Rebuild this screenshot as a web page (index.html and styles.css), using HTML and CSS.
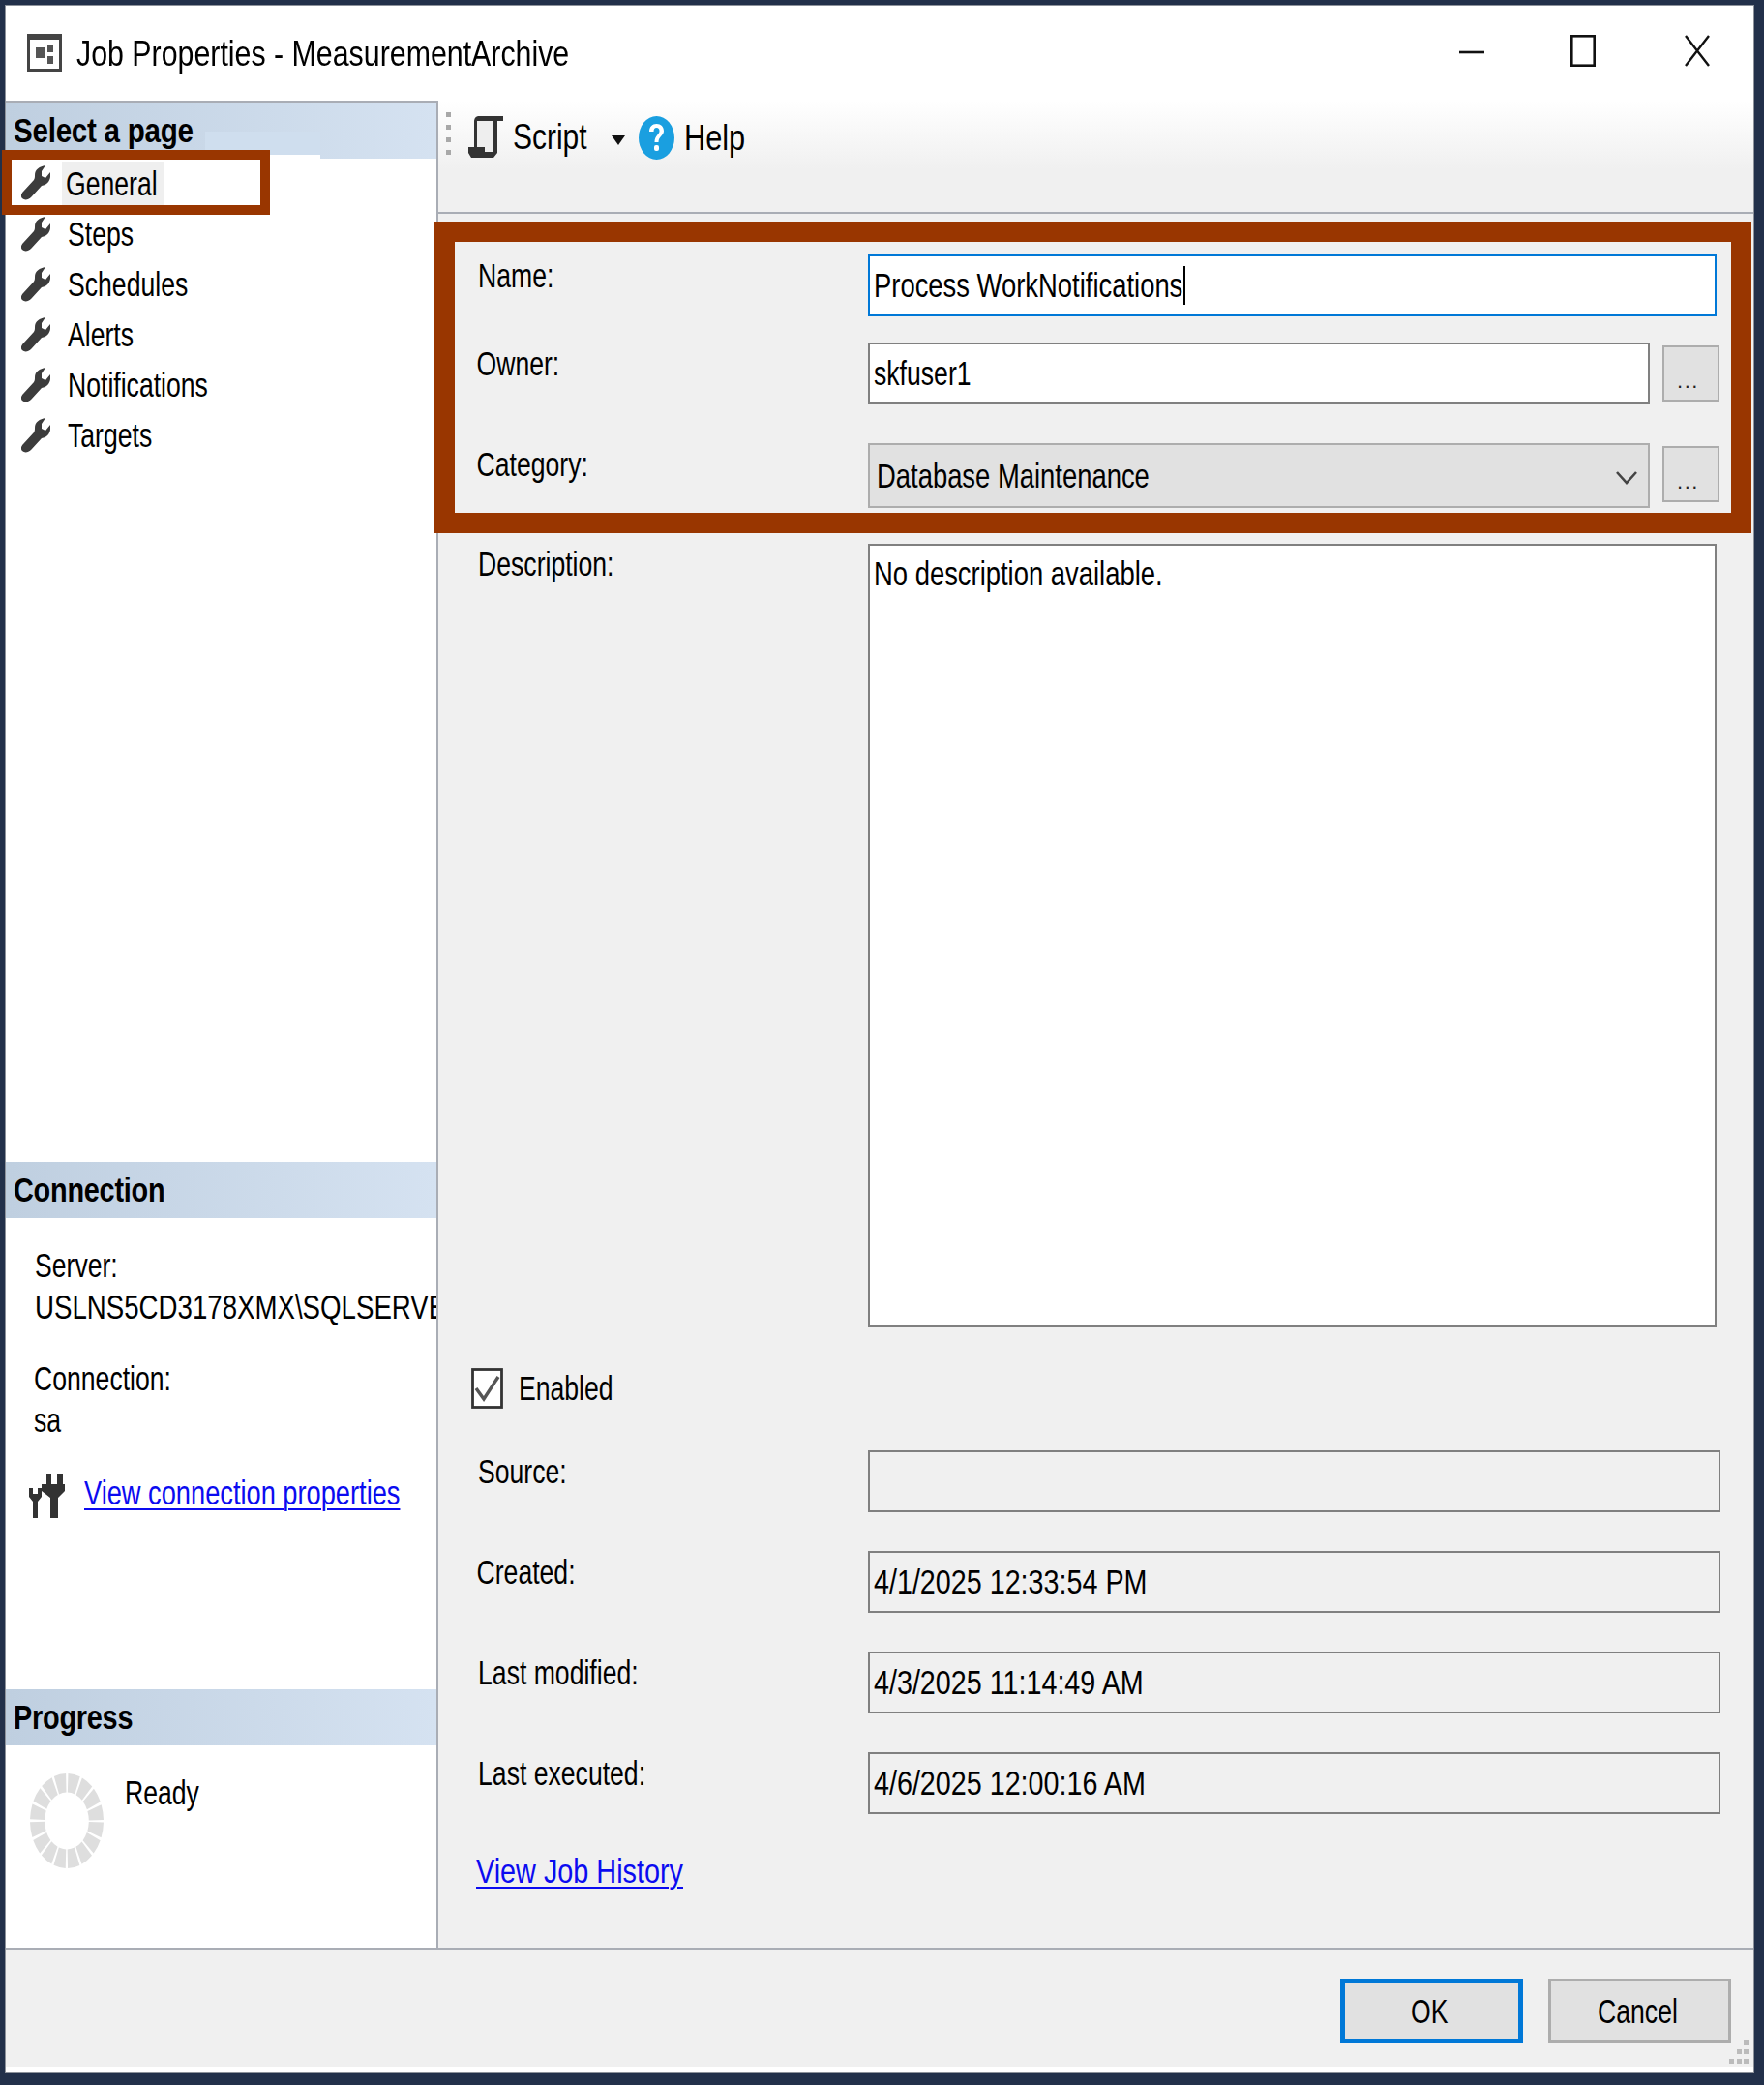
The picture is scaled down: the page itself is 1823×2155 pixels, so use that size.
FILE: index.html
```html
<!DOCTYPE html>
<html lang="en">
<head>
<meta charset="utf-8">
<title>Job Properties - MeasurementArchive</title>
<link rel="stylesheet" href="styles.css">
</head>
<body>
<svg class="defs" aria-hidden="true"><defs><path id="wrench" d="M14 10C14 4 19 1 25 0L21 6V11L25 13L30 7C31 14 28 20 21 21L10 33C7 36 3 36 1 34C-1 32 0 29 2 27L13 15C14 13 14 12 14 10Z"/></defs></svg>
<div class="screen">
  <div class="dialog">
    <header class="titlebar">
      <svg class="app-icon" viewBox="0 0 36 39"><rect x="1.5" y="1.5" width="33" height="36" fill="#fff" stroke="#444" stroke-width="3"/><rect x="2" y="2" width="32" height="4" fill="#444"/><rect x="9" y="14" width="9" height="11" fill="#555"/><rect x="21" y="12" width="6" height="7" fill="#555"/><rect x="21" y="23" width="6" height="8" fill="#555"/></svg>
      <span class="t title-text">Job Properties - MeasurementArchive</span>
      <div class="win-controls">
        <svg class="wc wc-min" viewBox="0 0 26 33"><path d="M0 18h26" stroke="#111" stroke-width="2.6" fill="none"/></svg>
        <svg class="wc wc-max" viewBox="0 0 26 33"><rect x="1.300" y="1.300" width="23.4" height="30.4" fill="none" stroke="#111" stroke-width="2.6"/></svg>
        <svg class="wc wc-close" viewBox="0 0 26 33"><path d="M1 1l24 31M25 1L1 32" stroke="#111" stroke-width="2.4" fill="none"/></svg>
      </div>
    </header>

    <div class="main">
      <aside class="side">
        <section class="side-sec sec-pages">
          <div class="side-head"><span class="t head-text head-select">Select a page</span><i class="head-patch"></i></div>
          <ul class="nav">
            <li class="nav-item"><svg class="wrench" viewBox="0 0 30 36"><use href="#wrench"/></svg><span class="nav-sel"><span class="t">General</span></span></li>
            <li class="nav-item"><svg class="wrench" viewBox="0 0 30 36"><use href="#wrench"/></svg><span class="t">Steps</span></li>
            <li class="nav-item"><svg class="wrench" viewBox="0 0 30 36"><use href="#wrench"/></svg><span class="t">Schedules</span></li>
            <li class="nav-item"><svg class="wrench" viewBox="0 0 30 36"><use href="#wrench"/></svg><span class="t">Alerts</span></li>
            <li class="nav-item"><svg class="wrench" viewBox="0 0 30 36"><use href="#wrench"/></svg><span class="t">Notifications</span></li>
            <li class="nav-item"><svg class="wrench" viewBox="0 0 30 36"><use href="#wrench"/></svg><span class="t">Targets</span></li>
          </ul>
        </section>

        <section class="side-sec sec-conn">
          <div class="side-head"><span class="t head-text">Connection</span></div>
          <div class="conn-body">
            <div class="conn-line"><span class="t">Server:</span></div>
            <div class="conn-line"><span class="t t-server">USLNS5CD3178XMX\SQLSERVER</span></div>
            <div class="conn-line conn-gap"><span class="t">Connection:</span></div>
            <div class="conn-line"><span class="t">sa</span></div>
            <div class="conn-link-row">
              <svg class="plug" viewBox="0 0 37 46"><path d="M0 15H4V21H9V15H13V24L9 29V46H4V29L0 24Z" fill="#333"/><path d="M18 0h5v11h-5zM29 0h6v11h-6zM13 11H37V18L30 25V46H22V25L13 18Z" fill="#333"/></svg>
              <a class="t link" href="#">View connection properties</a>
            </div>
          </div>
        </section>

        <section class="side-sec sec-prog">
          <div class="side-head"><span class="t head-text">Progress</span></div>
          <div class="prog-body">
            <svg class="spinner" viewBox="0 0 100 100" preserveAspectRatio="none"><circle cx="50" cy="50" r="40" fill="none" stroke="#dedede" stroke-width="20" stroke-dasharray="13.2 2.508" stroke-dashoffset="-1.254"/></svg>
            <span class="t ready">Ready</span>
          </div>
        </section>
      </aside>

      <div class="content">
        <div class="toolbar">
          <i class="grip"></i>
          <svg class="script-icon" viewBox="0 0 36 43"><path d="M9 3H29L27 37H7Z" fill="#eee"/><path d="M6 6C6 2 8 0 11 0H36V5H9V32H6Z" fill="#333"/><path d="M26 5H30V38L26 43H3L0 38V32H17V37H26Z" fill="#333"/><path d="M20 37H26V32H20Z" fill="#eee"/></svg>
          <span class="t tb-script">Script</span>
          <i class="caret-down"></i>
          <svg class="help-icon" viewBox="0 0 37 45" preserveAspectRatio="none"><ellipse cx="18.500" cy="22.500" rx="18.500" ry="22.500" fill="#1a9fe0"/><path d="M11 16C11 11 14 8 18.500 8C23 8 26 11 26 15.500C26 20 20.500 21 20.500 27H16.500C16.500 20 21.500 19 21.500 15.500C21.500 13.500 20.500 12 18.500 12C16.500 12 15.500 13.500 15.500 16Z" fill="#fff"/><rect x="16" y="30" width="5" height="6" rx="2" fill="#fff"/></svg>
          <span class="t tb-help">Help</span>
        </div>

        <form class="form">
          <div class="row row-name">
            <label class="t lbl">Name:</label>
            <div class="box box-focus box-wide"><span class="t t-name">Process WorkNotifications</span><i class="text-caret"></i></div>
          </div>
          <div class="row row-owner">
            <label class="t lbl lbl-l">Owner:</label>
            <div class="box box-mid"><span class="t">skfuser1</span></div>
            <button class="dots" type="button">...</button>
          </div>
          <div class="row row-cat">
            <label class="t lbl lbl-l">Category:</label>
            <div class="box box-mid box-combo"><span class="t t-name">Database Maintenance</span>
              <svg class="chevron" viewBox="0 0 22 16"><path d="M1 2l10 11L21 2" fill="none" stroke="#444" stroke-width="2.600"/></svg>
            </div>
            <button class="dots dots-cat" type="button">...</button>
          </div>
          <div class="row row-desc">
            <label class="t lbl lbl-d">Description:</label>
            <div class="box box-wide box-area"><span class="t t-name">No description available.</span></div>
          </div>
          <div class="row row-enabled">
            <label class="enabled">
              <svg class="check" viewBox="0 0 33 42"><rect x="1.500" y="1.500" width="30" height="39" fill="#fff" stroke="#333" stroke-width="2.800"/><path d="M5 21l8 11L28 9" fill="none" stroke="#555" stroke-width="3.400"/></svg>
              <span class="t">Enabled</span>
            </label>
          </div>
          <div class="row row-info">
            <label class="t lbl">Source:</label>
            <div class="box box-ro"></div>
          </div>
          <div class="row row-info">
            <label class="t lbl lbl-l">Created:</label>
            <div class="box box-ro"><span class="t t-date">4/1/2025 12:33:54 PM</span></div>
          </div>
          <div class="row row-info">
            <label class="t lbl">Last modified:</label>
            <div class="box box-ro"><span class="t t-date">4/3/2025 11:14:49 AM</span></div>
          </div>
          <div class="row row-info">
            <label class="t lbl">Last executed:</label>
            <div class="box box-ro"><span class="t t-date">4/6/2025 12:00:16 AM</span></div>
          </div>
          <a class="t link history" href="#">View Job History</a>
        </form>
      </div>
    </div>

    <footer class="footer">
      <button class="btn btn-ok" type="button"><span class="t">OK</span></button>
      <button class="btn" type="button"><span class="t">Cancel</span></button>
      <i class="resize-grip"></i>
    </footer>
  </div>

  <i class="mark mark-general"></i>
  <i class="mark mark-fields"></i>
</div>
</body>
</html>
```

FILE: styles.css
```css
* { box-sizing: border-box; }
html, body { margin: 0; padding: 0; }
body {
  width: 1823px;
  height: 2155px;
  overflow: hidden;
  background: #22304a;
  font-family: "Liberation Sans", Arial, sans-serif;
  color: #000;
}
.defs { position: absolute; width: 0; height: 0; }
.screen { position: relative; width: 1823px; height: 2155px; padding: 6px 11px 13px 6px; }
.dialog {
  width: 1806px;
  height: 2136px;
  display: flex;
  flex-direction: column;
  background: #fff;
  box-shadow: 0 0 0 1px #8d929b;
  filter: blur(0.6px);
}

/* scaled text: the reference is horizontally squeezed */
.t {
  display: inline-block;
  font-size: 35px;
  line-height: 44px;
  white-space: nowrap;
  transform: scaleX(0.76);
  transform-origin: 0 50%;
}
.t-name { transform: scaleX(0.783); }
.t-date { transform: scaleX(0.82); }
.t-server { transform: scaleX(0.79); }

/* title bar */
.titlebar {
  height: 98px;
  flex: none;
  display: flex;
  align-items: center;
  padding: 0 45px 6px 22px;
  background: #fff;
}
.app-icon { width: 36px; height: 39px; flex: none; margin-right: 15px; margin-top: 4px; }
.title-text { font-size: 37px; transform: scaleX(0.82); margin-top: 8px; }
.win-controls { margin-left: auto; display: flex; gap: 89px; width: 259px; flex: none; margin-right: 0; }
.wc { width: 26px; height: 33px; display: block; flex: none; }
.wc-close { margin-left: 3px; }

.main { height: 1909px; flex: none; display: flex; }

/* side */
.side {
  width: 447px;
  flex: none;
  display: flex;
  flex-direction: column;
  background: #fff;
  border-right: 2.5px solid #a9adb5;
  overflow: hidden;
}
.side-sec { display: flex; flex-direction: column; flex: none; }
.sec-pages { height: 1097px; border-top: 2px solid #a9adb5; }
.sec-conn { height: 545px; }
.sec-prog { height: 267px; }
.side-head {
  position: relative;
  height: 58px;
  flex: none;
  padding-left: 8px;
  display: flex;
  align-items: center;
  background: linear-gradient(90deg, #bfcfe0 0%, #d5e2f1 100%);
}
.head-text { font-weight: 700; transform: scaleX(0.825); letter-spacing: -0.3px; }
.head-select { transform: scaleX(0.845); }
.head-patch {
  position: absolute;
  left: 206px;
  top: 30px;
  width: 119px;
  height: 28px;
  background: linear-gradient(#cfdeee 85%, #fff 85%);
}
.nav { list-style: none; margin: 0; padding: 0; }
.nav-item { height: 52px; display: flex; align-items: center; padding-left: 16px; gap: 18px; }
.nav-item:first-child { gap: 12px; padding-bottom: 3px; }
.wrench { width: 30px; height: 36px; flex: none; fill: #3c3c3c; }
.nav-sel { width: 105px; height: 47px; background: #efefef; display: flex; align-items: center; padding-left: 4px; margin-top: 3px; }

.conn-body { padding: 27px 0 0 30px; }
.conn-line { height: 42.500px; line-height: 42px; white-space: nowrap; }
.conn-gap { margin: 32px 0 0 -1px; }
.conn-line:nth-child(4) { margin-left: -1px; }
.conn-link-row { display: flex; align-items: flex-start; margin: 35px 0 0 -6px; }
.plug { width: 37px; height: 46px; flex: none; margin-right: 20px; }
.link { color: #0b0bf0; text-decoration: underline; text-decoration-thickness: 2px; text-underline-offset: 4px; }
.conn-link-row .link { margin-top: -2px; transform: scaleX(0.778); }

.prog-body { display: flex; align-items: flex-start; padding: 29px 0 0 25px; }
.spinner { width: 76px; height: 98px; flex: none; margin-right: 22px; }
.ready { margin-top: -2px; }

/* content */
.content { flex: 1; min-width: 0; background: #f0f0f0; display: flex; flex-direction: column; }
.toolbar {
  height: 117px;
  flex: none;
  position: relative;
  display: flex;
  align-items: flex-start;
  padding: 16px 0 0 31px;
  background: linear-gradient(#fff 0%, #f0f0f0 62%);
  border-bottom: 2.5px solid #a9adb5;
}
.grip {
  position: absolute;
  left: 8px;
  top: 12px;
  width: 5px;
  height: 45px;
  background: repeating-linear-gradient(#a8a8a8 0 5px, transparent 5px 13px);
}
.script-icon { width: 36px; height: 43px; flex: none; }
.tb-script { margin: 0 0 0 10px; width: 102px; font-size: 37px; transform: scaleX(0.81); }
.caret-down {
  width: 0; height: 0; flex: none;
  margin-top: 20px;
  border-left: 7px solid transparent;
  border-right: 7px solid transparent;
  border-top: 10px solid #111;
}
.help-icon { width: 37px; height: 45px; flex: none; margin: 0 10px 0 14px; }
.tb-help { font-size: 37px; transform: scaleX(0.83); margin-top: 1px; }

.form { padding: 42px 0 0 0; display: flex; flex-direction: column; }
.row { display: flex; align-items: flex-start; flex: none; }
.row-name { height: 91px; }
.row-owner { height: 104px; }
.row-cat { height: 104px; }
.row-desc { height: 852px; }
.row-enabled { height: 85px; }
.row-info { height: 104px; }
.lbl { width: 444px; flex: none; padding-left: 54px; line-height: 44px; transform-origin: 0 50%; }
.lbl-l { padding-left: 52px; }
.lbl-d { line-height: 41px; }
.box {
  display: flex;
  align-items: center;
  height: 64px;
  padding-left: 4px;
  background: #fff;
  border: 2.5px solid #808080;
  flex: none;
  position: relative;
}
.box-wide { width: 877px; }
.box-mid { width: 808px; }
.box-focus { border-color: #0078d7; }
.box-combo { height: 67px; background: #e1e1e1; border-color: #adadad; padding-left: 7px; }
.box-area { height: 810px; align-items: flex-start; padding-top: 7px; }
.box-ro { width: 881px; height: 64px; background: #f0f0f0; }
.text-caret { position: absolute; left: 324px; top: 10px; width: 2px; height: 40px; background: #000; }
.chevron { position: absolute; right: 11px; top: 26px; width: 22px; height: 16px; }
.dots {
  width: 59px;
  height: 58px;
  margin: 3px 0 0 13px;
  padding: 16px 6px 0 0;
  background: #e1e1e1;
  border: 2.5px solid #adadad;
  font: 22px/22px "Liberation Sans", sans-serif;
  letter-spacing: 1.5px;
  color: #222;
  border-radius: 0;
}
.enabled { display: flex; align-items: center; gap: 16px; height: 42px; margin-left: 34px; }
.check { width: 33px; height: 42px; flex: none; }
.history { align-self: flex-start; margin: -3px 0 0 39px; transform: scaleX(0.823); }

/* footer */
.footer {
  position: relative;
  height: 127px;
  flex: none;
  display: flex;
  justify-content: flex-end;
  align-items: flex-start;
  gap: 26px;
  padding: 30px 23px 0 0;
  background: #f0f0f0;
  border-top: 2.5px solid #a9adb5;
  border-bottom: 4px solid #fff;
}
.btn {
  width: 189px;
  height: 67px;
  padding: 0 0 0 10px;
  background: #e1e1e1;
  border: 3px solid #adadad;
  border-radius: 0;
  font: inherit;
  display: flex;
  align-items: center;
  justify-content: center;
}
.btn .t { transform-origin: 50% 50%; margin-left: -14px; }
.btn-ok { border: 5px solid #0078d7; }
.resize-grip {
  position: absolute;
  right: 5px;
  bottom: 3px;
  width: 20px;
  height: 24px;
  background:
    linear-gradient(#bbb, #bbb) 15px 0/5px 5px no-repeat,
    linear-gradient(#bbb, #bbb) 8px 9px/5px 5px no-repeat,
    linear-gradient(#bbb, #bbb) 15px 9px/5px 5px no-repeat,
    linear-gradient(#bbb, #bbb) 0 19px/5px 5px no-repeat,
    linear-gradient(#bbb, #bbb) 8px 19px/5px 5px no-repeat,
    linear-gradient(#bbb, #bbb) 15px 19px/5px 5px no-repeat;
}

/* annotation rectangles drawn over the screenshot */
.mark { position: absolute; display: block; border-style: solid; border-color: #993600; }
.mark-general { left: 2px; top: 155px; width: 277px; height: 67px; border-width: 10px; }
.mark-fields { left: 449px; top: 229px; width: 1361px; height: 322px; border-width: 21px; }
```
